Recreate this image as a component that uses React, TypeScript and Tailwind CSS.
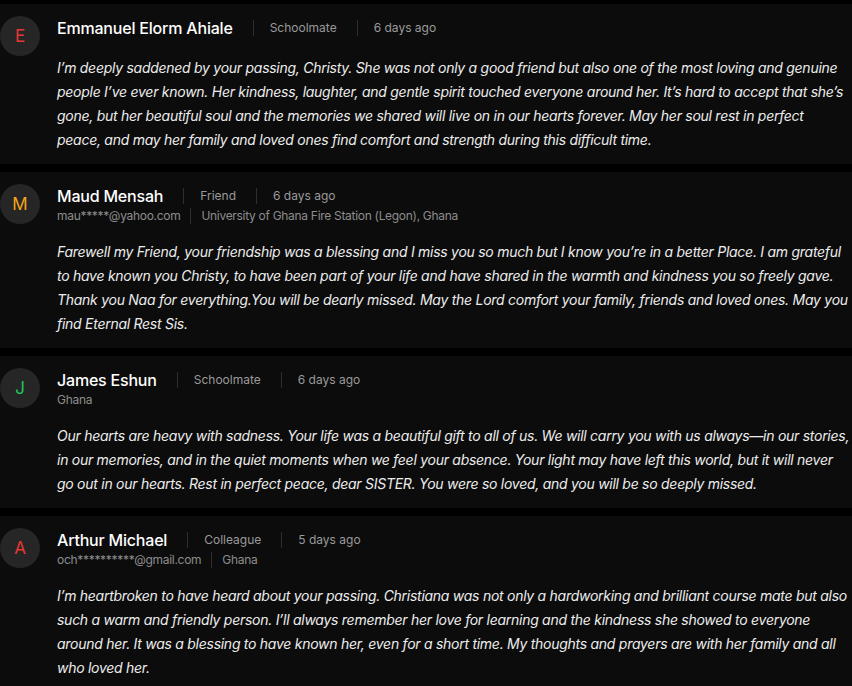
import React from 'react'

type Tribute = {
  initial: string
  initialColor: string
  name: string
  relation: string
  time: string
  email?: string
  location?: string
  lines: string[]
}

const TRIBUTES: Tribute[] = [
  {
    initial: 'E',
    initialColor: 'text-[#e53935]',
    name: 'Emmanuel Elorm Ahiale',
    relation: 'Schoolmate',
    time: '6 days ago',
    lines: [
      'I’m deeply saddened by your passing, Christy. She was not only a good friend but also one of the most loving and genuine',
      'people I’ve ever known. Her kindness, laughter, and gentle spirit touched everyone around her. It’s hard to accept that she’s',
      'gone, but her beautiful soul and the memories we shared will live on in our hearts forever. May her soul rest in perfect',
      'peace, and may her family and loved ones find comfort and strength during this difficult time.',
    ],
  },
  {
    initial: 'M',
    initialColor: 'text-[#f4a41a]',
    name: 'Maud Mensah',
    relation: 'Friend',
    time: '6 days ago',
    email: 'mau*****@yahoo.com',
    location: 'University of Ghana Fire Station (Legon), Ghana',
    lines: [
      'Farewell my Friend, your friendship was a blessing and I miss you so much but I know you’re in a better Place. I am grateful',
      'to have known you Christy, to have been part of your life and have shared in the warmth and kindness you so freely gave.',
      'Thank you Naa for everything.You will be dearly missed. May the Lord comfort your family, friends and loved ones. May you',
      'find Eternal Rest Sis.',
    ],
  },
  {
    initial: 'J',
    initialColor: 'text-[#22c55e]',
    name: 'James Eshun',
    relation: 'Schoolmate',
    time: '6 days ago',
    location: 'Ghana',
    lines: [
      'Our hearts are heavy with sadness. Your life was a beautiful gift to all of us. We will carry you with us always—in our stories,',
      'in our memories, and in the quiet moments when we feel your absence. Your light may have left this world, but it will never',
      'go out in our hearts. Rest in perfect peace, dear SISTER. You were so loved, and you will be so deeply missed.',
    ],
  },
  {
    initial: 'A',
    initialColor: 'text-[#e53935]',
    name: 'Arthur Michael',
    relation: 'Colleague',
    time: '5 days ago',
    email: 'och**********@gmail.com',
    location: 'Ghana',
    lines: [
      'I’m heartbroken to have heard about your passing. Christiana was not only a hardworking and brilliant course mate but also',
      'such a warm and friendly person. I’ll always remember her love for learning and the kindness she showed to everyone',
      'around her. It was a blessing to have known her, even for a short time. My thoughts and prayers are with her family and all',
      'who loved her.',
    ],
  },
]

function TributeCard({ t }: { t: Tribute }) {
  const sub = [t.email, t.location].filter(Boolean) as string[]
  return (
    <div className="bg-[#0c0c0c] pt-3 pb-3 pr-2 flex gap-[17px]">
      <div className="w-10 h-10 shrink-0 rounded-full bg-[#262626] flex items-center justify-center">
        <span className={`${t.initialColor} text-[17px] leading-none`}>{t.initial}</span>
      </div>
      <div className="flex-1 min-w-0">
        <div className="flex items-center h-6">
          <span className="text-white text-base font-medium tracking-[-0.2px]">{t.name}</span>
          <span className="ml-5 pl-4 border-l border-[#2e2e2e] text-xs text-[#9a9a9a] leading-4">{t.relation}</span>
          <span className="ml-5 pl-4 border-l border-[#2e2e2e] text-xs text-[#9a9a9a] leading-4">{t.time}</span>
        </div>
        {sub.length > 0 && (
          <div className="flex items-center h-4 text-xs tracking-[-0.3px] text-[#8c8c8c]">
            {sub.map((s, i) => (
              <span key={s} className={i > 0 ? 'ml-2.5 pl-2.5 border-l border-[#2e2e2e]' : ''}>{s}</span>
            ))}
          </div>
        )}
        <p className="mt-4 text-sm leading-6 italic tracking-[-0.27px] text-[#ececec] whitespace-nowrap">
          {t.lines.map((l, i) => (
            <React.Fragment key={i}>
              {l}
              {i < t.lines.length - 1 && <br />}
            </React.Fragment>
          ))}
        </p>
      </div>
    </div>
  )
}

export default function App() {
  return (
    <div className="min-h-screen bg-black pt-1 flex flex-col gap-2 overflow-hidden" style={{ fontFamily: 'Inter, "Noto Sans", sans-serif' }}>
      {TRIBUTES.map(t => (
        <TributeCard key={t.name} t={t} />
      ))}
    </div>
  )
}
